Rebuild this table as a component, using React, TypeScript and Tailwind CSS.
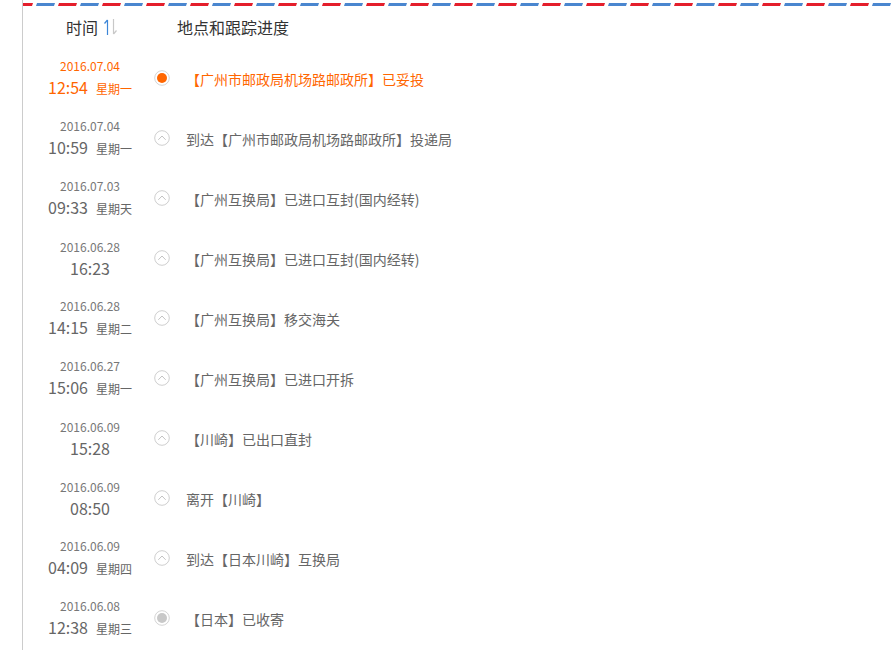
import React from "react";

type Row = { date: string; time: string; week?: string; text: string; kind: "active" | "mid" | "first" };

const rows: Row[] = [
  { date: "2016.07.04", time: "12:54", week: "星期一", text: "【广州市邮政局机场路邮政所】已妥投", kind: "active" },
  { date: "2016.07.04", time: "10:59", week: "星期一", text: "到达【广州市邮政局机场路邮政所】投递局", kind: "mid" },
  { date: "2016.07.03", time: "09:33", week: "星期天", text: "【广州互换局】已进口互封(国内经转)", kind: "mid" },
  { date: "2016.06.28", time: "16:23", text: "【广州互换局】已进口互封(国内经转)", kind: "mid" },
  { date: "2016.06.28", time: "14:15", week: "星期二", text: "【广州互换局】移交海关", kind: "mid" },
  { date: "2016.06.27", time: "15:06", week: "星期一", text: "【广州互换局】已进口开拆", kind: "mid" },
  { date: "2016.06.09", time: "15:28", text: "【川崎】已出口直封", kind: "mid" },
  { date: "2016.06.09", time: "08:50", text: "离开【川崎】", kind: "mid" },
  { date: "2016.06.09", time: "04:09", week: "星期四", text: "到达【日本川崎】互换局", kind: "mid" },
  { date: "2016.06.08", time: "12:38", week: "星期三", text: "【日本】已收寄", kind: "first" },
];

function Dot({ kind }: { kind: Row["kind"] }) {
  if (kind === "mid") {
    return (
      <svg width="16" height="16" viewBox="0 0 16 16">
        <circle cx="8" cy="8" r="7.3" fill="#fff" stroke="#cfcfcf" strokeWidth="1" />
        <polyline points="4.3,9.8 8,6 11.7,9.8" fill="none" stroke="#c4c4c4" strokeWidth="1" />
      </svg>
    );
  }
  const fill = kind === "active" ? "#ff6600" : "#c8c8c8";
  return (
    <svg width="16" height="16" viewBox="0 0 16 16">
      <circle cx="8" cy="8" r="7.3" fill="#fff" stroke="#d4d4d4" strokeWidth="1" />
      <circle cx="8" cy="8" r="5" fill={fill} />
    </svg>
  );
}

export default function App() {
  return (
    <div
      className="flex h-[650px] w-[891px] overflow-hidden bg-white"
      style={{ fontFamily: '"Noto Sans CJK SC", "Noto Sans", sans-serif' }}
    >
      <div className="w-[22px] shrink-0" />
      <div className="w-px shrink-0 bg-[#cccccc]" />
      <div className="flex min-w-0 flex-1 flex-col">
        <div className="mt-[3px] h-[3px] w-full">
          <svg width="100%" height="3">
            <defs>
              <pattern id="air" x="-9" y="0" width="44" height="3" patternUnits="userSpaceOnUse">
                <polygon points="1,0 19,0 18,3 0,3" fill="#e41e2b" />
                <polygon points="23,0 41,0 40,3 22,3" fill="#4a86cf" />
              </pattern>
            </defs>
            <rect x="0" y="0" width="100%" height="3" fill="url(#air)" />
          </svg>
        </div>
        <div className="flex h-[42px] items-center text-[16px] text-[#333]">
          <div className="flex w-[131px] shrink-0 items-center pl-[43px]">
            <span className="leading-none">时间</span>
            <svg className="ml-[6px]" width="14" height="16" viewBox="0 0 14 16">
              <line x1="3.5" y1="1" x2="3.5" y2="16" stroke="#3c86d8" strokeWidth="1.2" />
              <line x1="3.5" y1="1" x2="0.5" y2="4.5" stroke="#3c86d8" strokeWidth="1.2" />
              <line x1="9.5" y1="0" x2="9.5" y2="15" stroke="#c8c8c8" strokeWidth="1.2" />
              <line x1="9.5" y1="15" x2="12.5" y2="11.5" stroke="#c8c8c8" strokeWidth="1.2" />
            </svg>
          </div>
          <div className="pl-[23px] leading-none">地点和跟踪进度</div>
        </div>
        {rows.map((r, i) => {
          const active = r.kind === "active";
          return (
            <div key={i} className="flex h-[60px] items-center">
              <div className="flex w-[131px] shrink-0 flex-col items-center pl-[3px]">
                <div className={`text-[12px] leading-[20px] ${active ? "text-[#ff6600]" : "text-[#777]"}`}>{r.date}</div>
                <div className={`flex items-baseline gap-[8px] leading-[22px] ${active ? "text-[#ff6600]" : "text-[#666]"}`}>
                  <span className="text-[16px]">{r.time}</span>
                  {r.week && <span className="text-[12px]">{r.week}</span>}
                </div>
              </div>
              <div className="flex h-4 w-4 shrink-0">
                <Dot kind={r.kind} />
              </div>
              <div className={`ml-4 pt-[3px] text-[14px] ${active ? "text-[#ff6600]" : "text-[#666]"}`}>{r.text}</div>
            </div>
          );
        })}
      </div>
    </div>
  );
}
